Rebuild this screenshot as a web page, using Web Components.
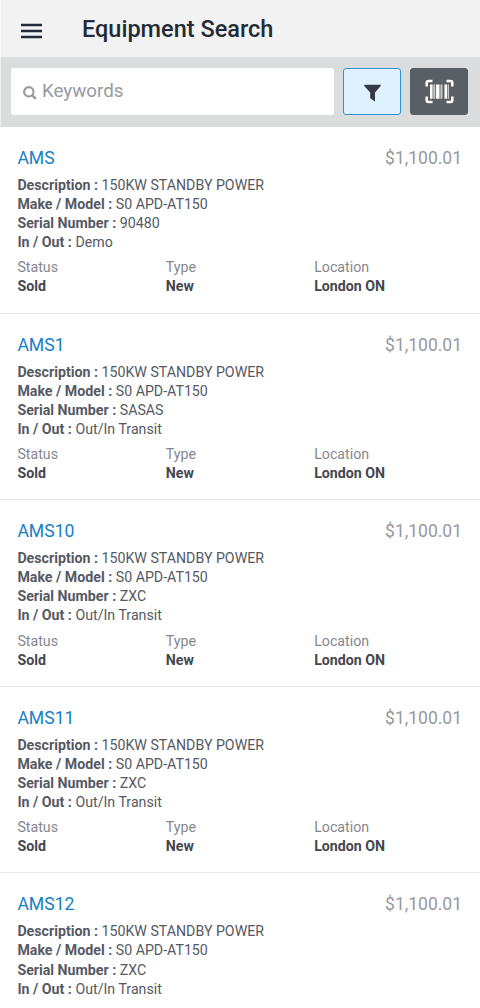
<!DOCTYPE html>
<html lang="en">
<head>
<meta charset="utf-8">
<title>Equipment Search</title>
<style>
html,body{margin:0;height:1008px;overflow:hidden;background:#fff}
body{font-family:Roboto,"Liberation Sans",sans-serif;color:#555962}
</style>
</head>
<body>
<equipment-app></equipment-app>
<script>
const define = (name, html, setup) => customElements.define(name, class extends HTMLElement {
  connectedCallback() {
    if (this.shadowRoot) return;
    const t = document.createElement('template');
    t.innerHTML = html;
    this.attachShadow({mode: 'open'}).append(t.content.cloneNode(true));
    if (setup) setup(this, this.shadowRoot);
  }
});

define('app-header', `
<style>
:host{display:flex;align-items:center;height:57px;box-sizing:border-box;background:#f2f2f2;border-left:1px solid #fafafa;padding:1px 0 0 20px;color:#222b36}
svg{width:21px;height:16px;margin-top:3px;flex:none}
h1{font-size:23.5px;line-height:28px;font-weight:500;margin:-1px 0 0 40px;white-space:nowrap}
</style>
<svg viewBox="0 0 21 16"><path d="M0 2h21M0 8h21M0 14h21" stroke="currentColor" stroke-width="2.3" fill="none"/></svg>
<h1><slot></slot></h1>`);

define('search-field', `
<style>
:host{display:flex;align-items:center;height:47px;box-sizing:border-box;background:#fff;border-radius:3px;padding-left:11.5px;color:#97999e;font-size:18.8px}
svg{width:14px;height:14px;margin:2px 5px 0 0;flex:none}
span{line-height:24px;margin-top:-2px}
</style>
<svg viewBox="0 0 14 14"><circle cx="5.8" cy="5.8" r="4.7" fill="none" stroke="currentColor" stroke-width="2.1"/><path d="M9.2 9.2 12.9 12.9" stroke="currentColor" stroke-width="2.4"/></svg>
<span><slot></slot></span>`);

define('tool-button', `
<style>
:host{display:flex;align-items:center;justify-content:center;box-sizing:border-box;width:58px;height:47px;border-radius:3px;border:1px solid #2c93d5;background:#dff1ff;color:#343b45}
:host([dark]){background:#5a5e65;border-color:#5a5e65;color:#fff}
</style><slot></slot>`);

define('search-bar', `
<style>
:host{display:grid;grid-template-columns:323px 58px 58px;column-gap:9px;align-items:start;height:70px;box-sizing:border-box;background:#dbdcde;border-left:1px solid #efefef;padding:11px 0 0 10.4px}
svg{display:block}
.filter{width:17px;height:18px;margin:2px 0 0 1px}
.scan{width:29px;height:25px}
</style>
<search-field>Keywords</search-field>
<tool-button><svg class="filter" viewBox="0 0 17 18"><path d="M.3.7h16.4v1.4L11 8.5v9L6.2 14.2V8.5L.3 2.1z" fill="currentColor"/></svg></tool-button>
<tool-button dark><svg class="scan" viewBox="0 0 29 25"><path d="M1.7 7.5V3.8Q1.7 2 3.5 2H7.5M21.5 2h4q1.8 0 1.8 1.8V7.5M1.7 17.5v3.7q0 1.8 1.8 1.8h4M21.5 23h4q1.8 0 1.8-1.8V17.5" fill="none" stroke="currentColor" stroke-width="2.5"/><g fill="currentColor"><path d="M5 5.4h2.6v14.4H5zM11.1 5.4h3.4v14.4h-3.4zM19.5 5.4h2.7v14.4h-2.7z"/><path opacity=".65" d="M8.3 5.4h2v14.4h-2zM15.4 5.4h2.1v14.4h-2.1zM22.9 5.4h1.1v14.4h-1.1z"/></g></svg></tool-button>`);

define('info-line', `
<style>
:host{display:block;line-height:19.1px;height:19.1px;font-size:14.2px;white-space:nowrap}
b{font-weight:700}
</style><b></b> <slot></slot>`, (h, r) => r.querySelector('b').textContent = h.getAttribute('label') + ' :');

define('stat-cell', `
<style>
:host{display:block;font-size:14.2px;line-height:19.1px;color:#85878c}
b{display:block;font-weight:700;color:#44474e}
</style><span></span><b><slot></slot></b>`, (h, r) => r.querySelector('span').textContent = h.getAttribute('label'));

define('equipment-card', `
<style>
:host{display:block;box-sizing:border-box;height:186.6px;border-bottom:1.5px solid #e6e6e7;padding:19px 18px 0 17.4px}
header{display:flex;justify-content:space-between;font-size:17.6px;line-height:24px;height:30px}
.name{color:#147fc6}.price{color:#97999e;font-size:17.5px}
footer{display:grid;grid-template-columns:148.4px 148.4px 1fr;margin-top:6px}
</style>
<header><span class="name"></span><span class="price">$1,100.01</span></header>
<info-line label="Description">150KW STANDBY POWER</info-line>
<info-line label="Make / Model">S0 APD-AT150</info-line>
<info-line label="Serial Number"><span class="serial"></span></info-line>
<info-line label="In / Out"><span class="transit"></span></info-line>
<footer><stat-cell label="Status">Sold</stat-cell><stat-cell label="Type">New</stat-cell><stat-cell label="Location">London ON</stat-cell></footer>`,
(h, r) => {
  for (const k of ['name', 'serial', 'transit']) r.querySelector('.' + k).textContent = h.getAttribute(k);
  if (h.hasAttribute('brief')) r.querySelector('footer').remove();
});

define('equipment-app', `
<style>:host{display:block;width:480px;height:1008px;overflow:hidden;background:#fff}</style>
<app-header>Equipment Search</app-header>
<search-bar></search-bar>
<equipment-card name="AMS" serial="90480" transit="Demo"></equipment-card>
<equipment-card name="AMS1" serial="SASAS" transit="Out/In Transit"></equipment-card>
<equipment-card name="AMS10" serial="ZXC" transit="Out/In Transit"></equipment-card>
<equipment-card name="AMS11" serial="ZXC" transit="Out/In Transit"></equipment-card>
<equipment-card brief name="AMS12" serial="ZXC" transit="Out/In Transit"></equipment-card>`);
</script>
</body>
</html>
